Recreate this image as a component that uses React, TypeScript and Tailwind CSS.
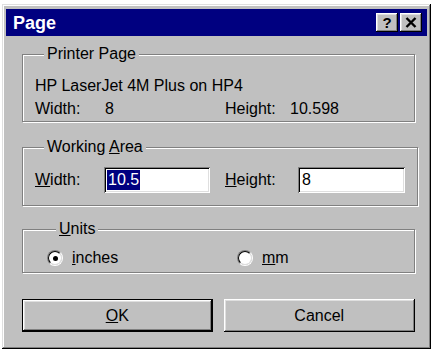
import type { ReactNode } from 'react'

const raised = 'bg-[#c0c0c0] shadow-[inset_-1px_-1px_#000,inset_1px_1px_#fff,inset_-2px_-2px_#808080,inset_2px_2px_#dfdfdf]'
const sunken = 'bg-white shadow-[inset_1px_1px_#808080,inset_-1px_-1px_#fff,inset_2px_2px_#000,inset_-2px_-2px_#dfdfdf]'

function Group({ label, className, children }: { label: ReactNode; className?: string; children: ReactNode }) {
  return (
    <fieldset className={`border border-[#808080] shadow-[inset_1px_1px_0_#fff,1px_1px_0_#fff] ${className ?? ''}`}>
      <legend className="ml-[9px] bg-[#c0c0c0] px-[3px] text-[16px] leading-[18px]">{label}</legend>
      {children}
    </fieldset>
  )
}

function Radio({ checked }: { checked?: boolean }) {
  return (
    <span className="grid h-[16px] w-[16px] place-items-center rounded-full border border-t-[#808080] border-l-[#808080] border-b-white border-r-white">
      <span className="grid h-[14px] w-[14px] place-items-center rounded-full border border-t-black border-l-black border-b-[#dfdfdf] border-r-[#dfdfdf] bg-white">
        {checked && <span className="h-[5px] w-[5px] rounded-full bg-black" />}
      </span>
    </span>
  )
}

export default function App() {
  return (
    <div className="min-h-screen bg-white pl-[2px] pt-[4px] font-['Liberation_Sans',Arial,sans-serif] text-black">
      <div className="h-[345px] w-[429px] bg-[#c0c0c0] p-[4px] shadow-[inset_-1px_-1px_#000,inset_1px_1px_#dfdfdf,inset_-2px_-2px_#808080,inset_2px_2px_#fff]">
        {/* title bar */}
        <div className="mt-[1px] flex h-[27px] items-center justify-between bg-[#000080] pl-[7px] pr-[5px]">
          <span className="text-[18px] font-bold leading-none text-white">Page</span>
          <div className="flex gap-[2px]">
            <div className={`grid h-[19px] w-[22px] place-items-center text-[15px] font-bold leading-none ${raised}`}>?</div>
            <div className={`grid h-[19px] w-[22px] place-items-center ${raised}`}>
              <svg width="12" height="11" viewBox="0 0 12 11">
                <path d="M1.5 1 L10.5 10 M10.5 1 L1.5 10" stroke="#000" strokeWidth="2.4" />
              </svg>
            </div>
          </div>
        </div>

        <div className="pl-[16px] pr-[12px]">
          <Group label="Printer Page" className="mt-[9px] px-[12px] pb-[1px] pt-[11px]">
            <div className="text-[16px] leading-[23px]">HP LaserJet 4M Plus on HP4</div>
            <div className="flex text-[16px] leading-[23px]">
              <span className="w-[70px]">Width:</span>
              <span className="w-[120px]">8</span>
              <span className="w-[65px]">Height:</span>
              <span>10.598</span>
            </div>
          </Group>

          <Group
            label={<>Working <u>A</u>rea</>}
            className="mt-[16px] px-[12px] pb-[12px] pt-[11px]"
          >
            <div className="flex items-center text-[16px]">
              <span className="w-[69px]"><u>W</u>idth:</span>
              <div className={`flex h-[26px] w-[106px] items-center pl-[3px] ${sunken}`}>
                <span className="bg-[#000080] px-[1px] leading-[20px] text-white">10.5</span>
              </div>
              <span className="ml-[15px] w-[73px]"><u>H</u>eight:</span>
              <div className={`flex h-[26px] w-[107px] items-center pl-[4px] ${sunken}`}>
                <span className="leading-[20px]">8</span>
              </div>
            </div>
          </Group>

          <Group label={<><u>U</u>nits</>} className="mt-[14px] pb-[2px] pl-[24px] pt-[8px]">
            <div className="flex items-center text-[16px]">
              <div className="flex w-[190px] items-center gap-[9px]">
                <Radio checked />
                <span><u>i</u>nches</span>
              </div>
              <div className="flex items-center gap-[9px]">
                <Radio />
                <span><u>m</u>m</span>
              </div>
            </div>
          </Group>

          <div className="mt-[26px] flex gap-[11px]">
            <div className="h-[33px] w-[191px] border border-black">
              <div className={`grid h-full place-items-center text-[16px] ${raised}`}>
                <span><u>O</u>K</span>
              </div>
            </div>
            <div className={`grid h-[33px] w-[192px] place-items-center text-[16px] ${raised}`}>Cancel</div>
          </div>
        </div>
      </div>
    </div>
  )
}
